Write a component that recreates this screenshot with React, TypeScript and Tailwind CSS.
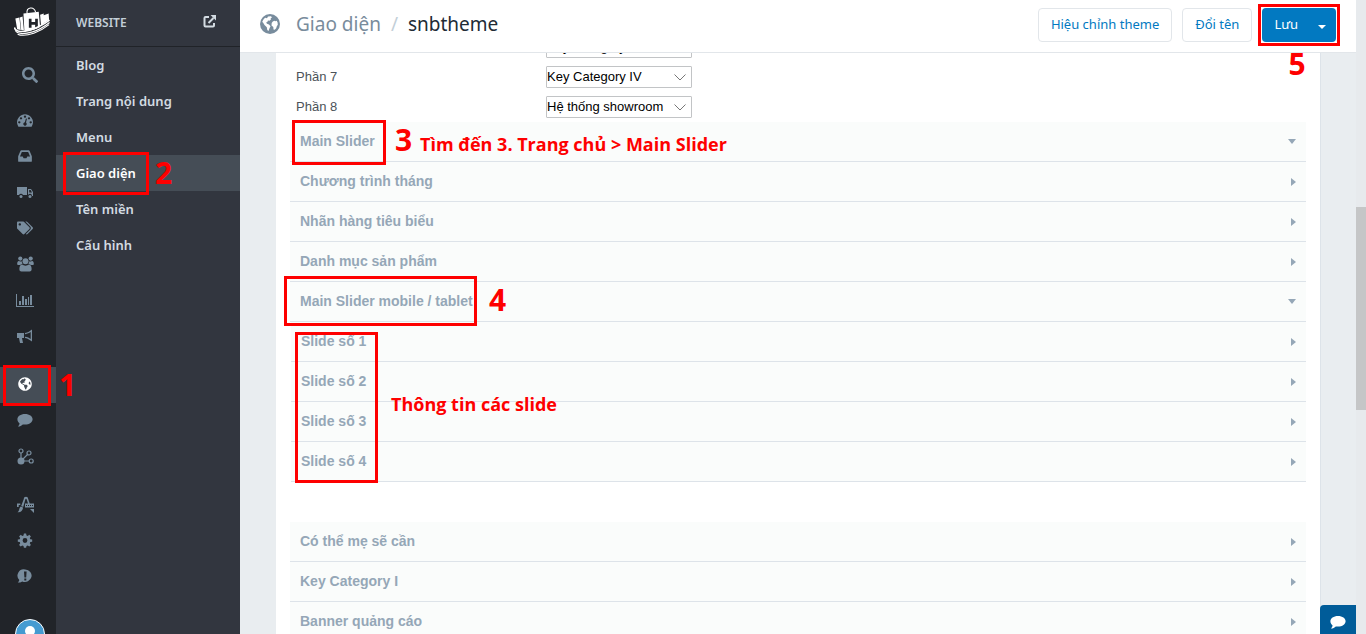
import type { ReactNode } from "react";
import { FaTags, FaGlobeAmericas, FaSearch } from "react-icons/fa";

function Logo() {
  return (
    <svg viewBox="9 5 40 34" className="h-[34px] w-9" fill="none">
      <path d="M23.500 12.500c-1-7 7.500-8.500 9.500-1.500" stroke="#fff" strokeWidth="1.200" />
      <path d="M10.500 18l4.500-1 1.500 14-4-1zM15.500 17l3-1 1.500 15h-3z" fill="#fff" />
      <path d="M19.500 12.500l17-2 1.500 17c-5 3-12 5-17.500 4z" fill="#fff" />
      <path d="M38 14l4-1.500v2l5.500-2 .5 7c-3 2-6 4.500-9 6z" fill="#fff" />
      <path d="M25.500 18.500h3v3.500h4v-3.500h3v10h-3V25h-4v3.500h-3z" fill="#212429" />
      <path d="M9.500 28c1 6 10 5 17 3 9-2.500 16-6.500 22-11" stroke="#fff" strokeWidth="1.800" />
      <path d="M10.500 31.500c3 5 12 3.500 19 1.500 7-2.300 14-6.500 19-10.500" stroke="#fff" strokeWidth="1.300" />
      <path d="M13 35.500c5 2.500 12 1 18-1 6-2 12-5.500 17-9.500" stroke="#fff" strokeWidth="1.200" />
    </svg>
  );
}

function Earth() {
  return (
    <svg viewBox="0 0 20 20" className="size-5 shrink-0" aria-hidden="true">
      <circle cx="10" cy="10" r="10" fill="#788c9d" />
      <path
        fill="#fff"
        d="M8 2.500l3-.3 1 1.300-1.300.8.200 1.200-1.400 1.300L8 6.600 7.300 8l-1.200.4.900 1.400 2 .7 1.500 1.700-1 2-1 2.800-1.200-1-.5-2.700L4.500 11 3 8.500 2.200 8C2.800 6 4 4.500 5.200 3.700L7 4.200zM12.800 7.500l1.600-.8 1 .6 1.300-.6.9 1.800.2 2.300-1 1.500-.6 2-1.500 1.500-1.200-.3-.2-2.500-1.800-1.500.2-2.500z"
      />
    </svg>
  );
}

function Glyph({ children, size = "h-4 w-4", box = "0 0 16 16" }: { children: ReactNode; size?: string; box?: string }) {
  return (
    <svg viewBox={box} className={size} fill="currentColor" aria-hidden="true">
      {children}
    </svg>
  );
}

const icons = {
  dashboard: (
    <Glyph box="0 0 1792 1792">
      <path d="M384 1152q0-53-37.500-90.500t-90.500-37.500-90.500 37.500-37.500 90.500 37.500 90.500 90.500 37.500 90.500-37.500 37.500-90.500zm192-448q0-53-37.500-90.500t-90.500-37.500-90.500 37.500-37.500 90.500 37.500 90.500 90.500 37.500 90.500-37.500 37.500-90.500zm428 481l101-382q6-26-7.500-48.500t-38.500-29.500-48 6.500-30 39.500l-101 382q-60 5-107 43.500t-63 98.500q-20 77 20 146t117 89 146-20 89-117q16-60-6-117t-72-91zm660-33q0-53-37.500-90.500t-90.500-37.500-90.500 37.500-37.500 90.500 37.500 90.500 90.500 37.500 90.500-37.500 37.500-90.500zm-640-640q0-53-37.500-90.500t-90.500-37.500-90.500 37.500-37.500 90.500 37.500 90.500 90.500 37.500 90.500-37.500 37.500-90.500zm448 192q0-53-37.500-90.500t-90.500-37.500-90.500 37.500-37.500 90.500 37.500 90.500 90.500 37.500 90.500-37.500 37.500-90.500zm320 448q0 261-141 483-19 29-54 29h-1402q-35 0-54-29-141-221-141-483 0-182 71-348t191-286 286-191 348-71 348 71 286 191 191 286 71 348z" />
    </Glyph>
  ),
  inbox: (
    <Glyph box="0 0 1792 1792">
      <path d="M1151 960h316q-1-3-2.500-8t-2.500-8l-212-496h-708l-212 496q-1 2-2.500 8t-2.500 8h316l95 192h320zm513 30v482q0 26-19 45t-45 19h-1408q-26 0-45-19t-19-45v-482q0-62 25-123l238-552q10-25 36.500-42t52.500-17h832q26 0 52.500 17t36.500 42l238 552q25 61 25 123z" />
    </Glyph>
  ),
  truck: (
    <Glyph>
      <path d="M0 3h10v8H6a2.300 2.300 0 0 0-4 0H0zM11 5h3l2 3v4h-1a2 2 0 0 0-4-.5zm1.200 1v2.500H15L13.600 6z" fillRule="evenodd" />
      <circle cx="4" cy="12.500" r="1.500" />
      <circle cx="13" cy="12.500" r="1.500" />
    </Glyph>
  ),
  tags: <FaTags size={16} />,
  users: (
    <Glyph size="h-4 w-[17px]" box="0 0 17 16">
      <circle cx="3.300" cy="2.600" r="2.100" />
      <circle cx="13.700" cy="2.600" r="2.100" />
      <circle cx="8.500" cy="5.300" r="3" />
      <path d="M.2 8.500C0 6.500.8 5 1.800 5c1 .6 2 .6 3 .2 0 1.300.3 2 .9 2.800-1 0-1.800.3-2.500 1H1zM16.800 8.500c.2-2-.6-3.500-1.600-3.500-1 .6-2 .6-3 .2 0 1.300-.3 2-.9 2.800 1 0 1.800.3 2.500 1H16z" />
      <path d="M5 8.500c2 1.500 5 1.500 7 0 2 .3 2.800 2.500 2.600 5 0 1.200-.9 2-2 2H4.400c-1.200 0-2-.8-2-2C2.200 11 3 8.800 5 8.500z" />
    </Glyph>
  ),
  chart: (
    <Glyph size="h-4 w-[18px]" box="0 0 18 16">
      <path d="M0 2h1v12h17v1H0zM3 9h2v4H3zM6 4h2v9H6zM9 7h2v6H9zM12 5h1v8h-1zM14 3h2v10h-2z" />
    </Glyph>
  ),
  bullhorn: (
    <Glyph>
      <path d="M0 5h7v5H5l1 5H3L2 10H0zM8 5c3-.5 5-2 7-3.500v12C13 12 11 10.500 8 10V8.800c2.500.3 4.200 1.200 5.700 2.200V4C12.200 5 10.500 5.900 8 6.200z" />
    </Glyph>
  ),
  globe: <FaGlobeAmericas size={14} />,
  bubble: (
    <Glyph>
      <path d="M8 2c4.400 0 7.600 2.400 7.600 5.300S12.400 12.600 8 12.600c-.8 0-1.500 0-2.200-.2C4.600 13.600 3 14.400 1 14.500c1-1 1.500-2 1.600-3C1.200 10.500.4 9 .4 7.300.4 4.400 3.600 2 8 2z" />
    </Glyph>
  ),
  nodes: (
    <Glyph size="h-[17px] w-[17px]" box="0 0 17 17">
      <circle cx="4" cy="13" r="3.500" />
      <g fill="none" stroke="currentColor" strokeWidth="1.200">
        <path d="M4 10V5M6 11l4.500-4.500M7 13h5" />
        <circle cx="4" cy="3" r="2" />
        <circle cx="12" cy="5" r="2" />
        <circle cx="14.200" cy="13" r="2" />
      </g>
    </Glyph>
  ),
  design: (
    <Glyph size="h-[17px] w-[17px]" box="0 0 17 17">
      <path d="M6.800 3c0-1.500.9-2.300 2.200-2.300S11 1.500 11.200 3l1.500 4.500H17v4H8v-4h3L9.700 3.500c-.2-.9-1.200-.9-1.400 0L6.200 11l-2-1zM0 7.500h3.300V9H1.700v2H0zM3.800 10.500l2.200 1C6 14 4 16.800.5 16.300c2-1 1.300-4.300 3.300-5.800zM13 13h4v4z" />
      <path d="M9 9h1v1H9zM11 9h1v1h-1zM13 9h1v1h-1zM15 9h1v1h-1z" fill="#212429" />
    </Glyph>
  ),
  gear: (
    <Glyph>
      <path
        fillRule="evenodd"
        d="M6.900 1.500h2.200l.4 1.900 1.200.5 1.600-1.100 1.600 1.600-1.100 1.600.5 1.200 1.900.3v2.200l-1.900.4-.5 1.200 1.100 1.600-1.600 1.600-1.600-1.100-1.200.5-.4 1.900H6.900l-.4-1.900-1.200-.5-1.600 1.100-1.600-1.600 1.100-1.600-.5-1.200-1.900-.4V7.500l1.900-.3.500-1.200-1.100-1.600 1.600-1.600 1.600 1.100 1.200-.5zM8 6.100a2.400 2.400 0 1 0 0 4.800 2.400 2.400 0 0 0 0-4.800z"
      />
    </Glyph>
  ),
  alert: (
    <Glyph>
      <path fillRule="evenodd" d="M8.300 1.500a6.700 6.200 0 1 1-3 11.900C4 14.300 2.500 14.600.8 14.600c.9-.9 1.400-1.800 1.500-2.600A6.300 6.300 0 0 1 8.300 1.500zM7 3.500l.4 6h1.800l.4-6zM7.300 10.500v2h2v-2z" />
    </Glyph>
  ),
};

const railGroups: { label: string; icon: ReactNode; active?: boolean }[][] = [
  [
    { label: "Tổng quan", icon: icons.dashboard },
    { label: "Đơn hàng", icon: icons.inbox },
    { label: "Vận chuyển", icon: icons.truck },
    { label: "Sản phẩm", icon: icons.tags },
    { label: "Khách hàng", icon: icons.users },
    { label: "Báo cáo", icon: icons.chart },
    { label: "Khuyến mãi", icon: icons.bullhorn },
  ],
  [
    { label: "Website", icon: icons.globe, active: true },
    { label: "Tin nhắn", icon: icons.bubble },
    { label: "Kênh bán hàng", icon: icons.nodes },
  ],
  [
    { label: "Ứng dụng", icon: icons.design },
    { label: "Cài đặt", icon: icons.gear },
    { label: "Trợ giúp", icon: icons.alert },
  ],
];

const menu = ["Blog", "Trang nội dung", "Menu", "Giao diện", "Tên miền", "Cấu hình"];

function Frame({ place }: { place: string }) {
  return <span aria-hidden="true" className={`pointer-events-none absolute z-20 border-3 border-[#fe0000] ${place}`} />;
}

function Note({ place, big, children }: { place: string; big?: boolean; children: ReactNode }) {
  return (
    <span
      className={`pointer-events-none absolute z-20 font-['Open_Sans',sans-serif] font-bold whitespace-nowrap text-[#fe0000] ${
        big ? "text-[30px] leading-8" : "text-lg leading-6"
      } ${place}`}
    >
      {children}
    </span>
  );
}

function Rail() {
  return (
    <nav aria-label="Chính" className="relative z-10 flex w-14 shrink-0 flex-col bg-[#212429] text-[#788c9d]">
      <a href="#" aria-label="Trang chủ" className="flex h-[47px] shrink-0 items-center justify-center pb-1 pl-2">
        <Logo />
      </a>
      <button aria-label="Tìm kiếm" className="flex h-14 shrink-0 items-center justify-center pl-1">
        <FaSearch size={16} />
      </button>
      <div className="flex shrink-0 flex-col gap-3">
        {railGroups.map((group, i) => (
          <div key={i}>
            {group.map((item) => (
              <a
                key={item.label}
                href="#"
                aria-label={item.label}
                className={`relative flex h-9 items-center justify-center pr-1.5 pb-0.5 ${item.active ? "bg-[#454d56] text-white" : ""}`}
              >
                {item.icon}
                {item.active && (
                  <>
                    <Frame place="-top-0.5 left-[3px] h-[41px] w-12" />
                    <Note big place="top-0.5 left-[59px]">1</Note>
                  </>
                )}
              </a>
            ))}
          </div>
        ))}
      </div>
      <a href="#" aria-label="Tài khoản" className="mt-6 ml-[15px] min-h-0 flex-1 overflow-hidden">
        <svg viewBox="0 0 30 30" className="size-[30px]">
          <circle cx="15" cy="15" r="14.500" fill="#459bd1" stroke="#fff" />
          <circle cx="15" cy="12" r="5" fill="#fff" />
          <path d="M5 25c1-9 19-9 20 0a14 14 0 0 1-20 0z" fill="#fff" />
        </svg>
      </a>
    </nav>
  );
}

function SideMenu() {
  return (
    <aside className="w-46 shrink-0 bg-[#32363f] font-['Noto_Sans',sans-serif] font-semibold text-[#d3dbe2]">
      <div className="flex h-[47px] items-center justify-between border-b border-[#202328] pr-6 pl-5">
        <h2 className="text-xs text-[#c3cfd8]">WEBSITE</h2>
        <a href="#" aria-label="Mở website" className="pb-1">
          <svg viewBox="0 0 13 13" className="size-[13px]" fill="none" stroke="currentColor" strokeWidth="2">
            <path d="M6 2H2.500Q1.500 2 1.500 3v7.500q0 1 1 1H10q1 0 1-1V8M5.500 8l5-5" />
            <path d="M7.500 0H13v5.500z" fill="currentColor" stroke="none" />
          </svg>
        </a>
      </div>
      <ul className="text-[13px]">
        {menu.map((item) => {
          const active = item === "Giao diện";
          return (
            <li key={item} className={`relative ${active ? "bg-[#454d56] text-white" : ""}`}>
              <a href="#" className="flex h-9 items-center px-5 pt-0.5">{item}</a>
              {active && (
                <>
                  <Frame place="-top-[3px] left-[7px] h-[43px] w-[86px]" />
                  <Note big place="top-0.5 left-[99px]">2</Note>
                </>
              )}
            </li>
          );
        })}
      </ul>
    </aside>
  );
}

function TopBar() {
  return (
    <header className="relative z-10 flex h-[53px] shrink-0 items-center justify-between border-b border-[#e2e6ea] bg-white px-5 pb-0.5 font-['Noto_Sans',sans-serif]">
      <div className="flex items-center pb-0.5 text-[19px]">
        <Earth />
        <a href="#" className="ml-4 text-[#798c9c]">Giao diện</a>
        <span className="mx-2.5 text-[#c3cfd8]">/</span>
        <h1 className="text-[#212b35]">snbtheme</h1>
      </div>
      <div className="flex gap-2.5 text-[13px] text-[#0279c1]">
        <button className="h-[34px] rounded border border-[#e2e6ea] px-3">Hiệu chỉnh theme</button>
        <button className="h-[34px] rounded border border-[#e2e6ea] px-3">Đổi tên</button>
        <div className="relative flex h-[34px] rounded bg-[#0279c1] text-white">
          <button className="pr-2.5 pl-3">Lưu</button>
          <button aria-label="Tùy chọn lưu" className="px-2.5">
            <svg viewBox="0 0 8 4" className="mt-1 h-1 w-2" fill="currentColor"><path d="M0 0h8L4 4z" /></svg>
          </button>
          <Frame place="-top-1 -left-1 -right-1 -bottom-1" />
          <Note big place="top-10 left-[26px]">5</Note>
        </div>
      </div>
    </header>
  );
}

function SectionSelect({ label, value, hideLabel }: { label: string; value: string; hideLabel?: boolean }) {
  const id = label.replace(" ", "-");
  return (
    <div className="flex h-[30px] items-center pl-5">
      <div className="w-[250px] text-[#4c5258]">{!hideLabel && <label htmlFor={id}>{label}</label>}</div>
      <div className="relative flex">
        <select
          id={id}
          aria-label={hideLabel ? label : undefined}
          defaultValue={value}
          className="h-[22px] w-[146px] appearance-none rounded-[1px] border border-[#c2c4c6] bg-white text-black"
        >
          <option>{value}</option>
        </select>
        <svg viewBox="0 0 12 7" className="pointer-events-none absolute top-2 right-1.5 h-[7px] w-3" fill="none" stroke="#777">
          <path d="M.5.500 6 6l5.500-5.500" />
        </svg>
      </div>
    </div>
  );
}

function Row({ title, open, children }: { title: string; open?: boolean; children?: ReactNode }) {
  return (
    <div className="relative">
      <button
        type="button"
        aria-expanded={!!open}
        className="flex h-10 w-full items-center justify-between border-b border-[#dde3e9] bg-[#fafcfb] px-2.5 text-left font-bold text-[#95a7b7]"
      >
        <span className="pb-0.5">{title}</span>
        {open ? (
          <svg viewBox="0 0 8 5" className="h-[5px] w-2" fill="currentColor"><path d="M0 0h8L4 5z" /></svg>
        ) : (
          <svg viewBox="0 0 5 8" className="h-2 w-[5px]" fill="currentColor"><path d="M0 0l5 4-5 4z" /></svg>
        )}
      </button>
      {children}
    </div>
  );
}

function ThemeForm() {
  return (
    <form className="-mt-[21px] mr-[35px] ml-9 border-r border-[#dde3e9] bg-white font-['Liberation_Sans',sans-serif] text-sm">
      <div className="text-[13px]">
        <SectionSelect label="Phần 6" value="Key Category III" hideLabel />
        <SectionSelect label="Phần 7" value="Key Category IV" />
        <SectionSelect label="Phần 8" value="Hệ thống showroom" />
      </div>
      <div className="mx-3.5">
        <Row title="Main Slider" open>
          <Frame place="-top-0.5 left-0.5 h-[45px] w-[94px]" />
          <Note big place="top-0.5 left-[105px]">3</Note>
          <Note place="top-2.5 left-[130px]">Tìm đến 3. Trang chủ &gt; Main Slider</Note>
        </Row>
        <Row title="Chương trình tháng" />
        <Row title="Nhãn hàng tiêu biểu" />
        <Row title="Danh mục sản phẩm" />
        <Row title="Main Slider mobile / tablet" open>
          <Frame place="-top-1.5 -left-1.5 h-[50px] w-[193px]" />
          <Note big place="top-0.5 left-[199px]">4</Note>
        </Row>
        <div className="relative mb-10 pl-px">
          <Row title="Slide số 1" />
          <Row title="Slide số 2" />
          <Row title="Slide số 3" />
          <Row title="Slide số 4" />
          <Frame place="top-2.5 left-[5px] h-[151px] w-[83px]" />
          <Note place="top-[70px] left-[101px]">Thông tin các slide</Note>
        </div>
        <Row title="Có thể mẹ sẽ cần" />
        <Row title="Key Category I" />
        <Row title="Banner quảng cáo" />
      </div>
    </form>
  );
}

export default function App() {
  return (
    <div className="flex h-screen overflow-hidden bg-[#e9edf0]">
      <Rail />
      <SideMenu />
      <div className="relative flex min-w-0 flex-1 flex-col">
        <TopBar />
        <main className="min-h-0 flex-1 overflow-hidden">
          <ThemeForm />
        </main>
        <button aria-label="Trò chuyện" className="absolute right-0 bottom-0 z-20 flex h-[29px] w-9 items-center justify-center rounded-tl bg-[#005c99] pt-1 text-white">
          {icons.bubble}
        </button>
      </div>
      <div aria-hidden="true" className="w-2.5 shrink-0 bg-[#e7eaed] pt-[207px]">
        <div className="h-[203px] bg-[#c5c6c7]" />
      </div>
    </div>
  );
}
